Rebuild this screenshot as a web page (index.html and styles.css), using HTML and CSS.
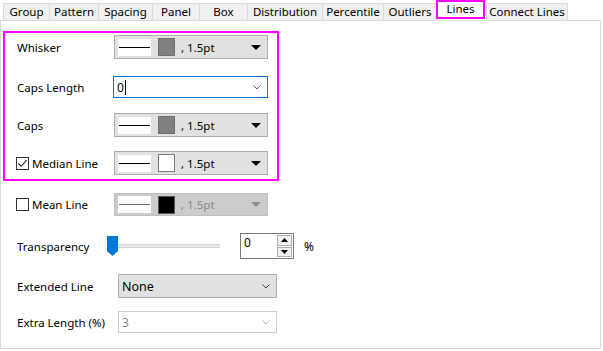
FILE: index.html
```html
<!DOCTYPE html>
<html lang="en">
<head>
    <meta charset="UTF-8">
    <title>Lines</title>
    <link rel="stylesheet" href="styles.css">
</head>
<body>
    <div class="tabs">
        <div class="tab">Group</div>
        <div class="tab">Pattern</div>
        <div class="tab">Spacing</div>
        <div class="tab">Panel</div>
        <div class="tab">Box</div>
        <div class="tab">Distribution</div>
        <div class="tab">Percentile</div>
        <div class="tab">Outliers</div>
        <div class="tab tab-active">Lines</div>
        <div class="tab">Connect Lines</div>
    </div>
    <div class="panel">
        <div class="group-box">
            <div class="row row-whisker">
                <span class="label">Whisker</span>
                <div class="combo">
                    <span class="line-sample"></span>
                    <span class="swatch swatch-gray"></span>
                    <span class="combo-text">, 1.5pt</span>
                    <span class="arrow"></span>
                </div>
            </div>
            <div class="row row-caps-length">
                <span class="label">Caps Length</span>
                <div class="edit-combo focused">
                    <span class="edit-text">0</span><span class="caret"></span>
                    <svg class="chevron" width="8" height="5" viewBox="0 0 8 5"><path d="M0.5 0.5 L4 4 L7.5 0.5" fill="none" stroke="#606060" stroke-width="1"/></svg>
                </div>
            </div>
            <div class="row row-caps">
                <span class="label">Caps</span>
                <div class="combo">
                    <span class="line-sample"></span>
                    <span class="swatch swatch-gray"></span>
                    <span class="combo-text">, 1.5pt</span>
                    <span class="arrow"></span>
                </div>
            </div>
            <div class="row row-median">
                <label class="label check-label">
                    <span class="checkbox">
                        <svg width="11" height="11" viewBox="0 0 11 11"><path d="M1.5 5.5 L4.2 8.3 L9.6 2.2" fill="none" stroke="#222" stroke-width="1.1"/></svg>
                    </span>
                    Median Line
                </label>
                <div class="combo">
                    <span class="line-sample"></span>
                    <span class="swatch swatch-white"></span>
                    <span class="combo-text">, 1.5pt</span>
                    <span class="arrow"></span>
                </div>
            </div>
        </div>

        <div class="row row-mean">
            <label class="label check-label">
                <span class="checkbox"></span>
                Mean Line
            </label>
            <div class="combo disabled">
                <span class="line-sample"></span>
                <span class="swatch swatch-black"></span>
                <span class="combo-text">, 1.5pt</span>
                <span class="arrow"></span>
            </div>
        </div>

        <div class="row row-transparency">
            <span class="label label-short">Transparency</span>
            <div class="slider">
                <div class="slider-track"></div>
                <svg class="slider-thumb" width="11" height="20" viewBox="0 0 11 20"><path d="M0 0 H11 V15 L5.5 20 L0 15 Z" fill="#0078d7"/></svg>
            </div>
            <div class="spin">
                <span class="spin-text">0</span>
                <div class="spin-buttons">
                    <span class="spin-btn"><svg width="7" height="4" viewBox="0 0 7 4"><path d="M0 4 L3.5 0 L7 4 Z" fill="#000"/></svg></span>
                    <span class="spin-btn"><svg width="7" height="4" viewBox="0 0 7 4"><path d="M0 0 L3.5 4 L7 0 Z" fill="#000"/></svg></span>
                </div>
            </div>
            <span class="unit">%</span>
        </div>

        <div class="row row-extended">
            <span class="label label-wide">Extended Line</span>
            <div class="drop">
                <span class="drop-text">None</span>
                <svg class="chevron" width="8" height="5" viewBox="0 0 8 5"><path d="M0.5 0.5 L4 4 L7.5 0.5" fill="none" stroke="#404040" stroke-width="1"/></svg>
            </div>
        </div>

        <div class="row row-extra">
            <span class="label label-wide">Extra Length (%)</span>
            <div class="drop drop-disabled">
                <span class="drop-text">3</span>
                <svg class="chevron" width="8" height="5" viewBox="0 0 8 5"><path d="M0.5 0.5 L4 4 L7.5 0.5" fill="none" stroke="#b4b4b4" stroke-width="1"/></svg>
            </div>
        </div>
    </div>
</body>
</html>
```

FILE: styles.css
```css
* {
    box-sizing: border-box;
}
body {
    margin: 0;
    width: 603px;
    height: 351px;
    background: #fff;
    font-family: 'Segoe UI', 'Noto Sans', sans-serif;
    font-size: 11.5px;
    color: #000;
    overflow: hidden;
}
.tabs {
    display: flex;
    align-items: flex-end;
    height: 20px;
    padding-left: 3px;
}
.tab {
    height: 17px;
    margin-left: -1px;
    border: 1px solid #d9d9d9;
    border-bottom: none;
    background: #f0f0f0;
    text-align: center;
    line-height: 15px;
    white-space: nowrap;
}
.tab:first-child { margin-left: 0; width: 47px; }
.tab:nth-child(2) { width: 50px; }
.tab:nth-child(3) { width: 55px; }
.tab:nth-child(4) { width: 48px; }
.tab:nth-child(5) { width: 49px; }
.tab:nth-child(6) { width: 76px; }
.tab:nth-child(7) { width: 62px; }
.tab:nth-child(8) { width: 54px; }
.tab:nth-child(10) { width: 82px; margin-left: 1px; }
.tab-active {
    width: 49px;
    height: 19px;
    margin-bottom: 1px;
    border: 2px solid #ff00ff;
    background: #fff;
    line-height: 13px;
    position: relative;
    z-index: 1;
}
.panel {
    width: 601px;
    height: 329px;
    border: 1px solid #d9d9d9;
    background: #fff;
    padding-top: 10px;
}
.group-box {
    width: 276px;
    margin-left: 2px;
    border: 2px solid #ff00ff;
    padding: 2px 0 4px 11px;
}
.row {
    display: flex;
    align-items: center;
}
.label {
    width: 98px;
    flex: none;
    padding-left: 1px;
    white-space: nowrap;
}
.check-label {
    display: flex;
    align-items: center;
    padding-left: 0;
}
.checkbox {
    width: 13px;
    height: 13px;
    border: 1px solid #333;
    background: #fff;
    margin-right: 3px;
    display: flex;
    align-items: center;
    justify-content: center;
}
.row-whisker { height: 24px; }
.row-caps-length { height: 22px; margin-top: 17px; }
.row-caps { height: 24px; margin-top: 15px; }
.row-median { height: 24px; margin-top: 14px; }

.combo {
    width: 154px;
    height: 100%;
    display: flex;
    align-items: center;
    background: #e1e1e1;
    border: 1px solid #adadad;
    padding-left: 3px;
}
.line-sample {
    width: 33px;
    height: 17px;
    background: #fff;
    position: relative;
}
.line-sample::after {
    content: "";
    position: absolute;
    left: 1px;
    right: 1px;
    top: 8px;
    height: 1px;
    background: #000;
}
.swatch {
    width: 17px;
    height: 18px;
    margin-left: 7px;
    border: 1px solid #6e6e6e;
}
.swatch-gray { background: #808080; }
.swatch-white { background: #fff; border-color: #7a7a7a; }
.swatch-black { background: #000; border-color: #555; }
.combo-text {
    margin-left: 6px;
    flex: 1;
}
.arrow {
    width: 0;
    height: 0;
    margin-right: 6px;
    border-left: 5px solid transparent;
    border-right: 5px solid transparent;
    border-top: 5px solid #000;
}
.combo.disabled {
    background: #cccccc;
    border-color: #bfbfbf;
}
.combo.disabled .combo-text { color: #8a8a8a; }
.combo.disabled .arrow { border-top-color: #8c8c8c; }
.combo.disabled .line-sample::after { background: #6d6d6d; }

.edit-combo {
    width: 155px;
    height: 100%;
    margin-left: -1px;
    border: 1px solid #7a7a7a;
    display: flex;
    align-items: center;
    padding-left: 3px;
    padding-right: 6px;
    font-size: 12px;
}
.edit-combo.focused { border-color: #0078d7; }
.caret {
    width: 1px;
    height: 15px;
    background: #000;
    margin-left: 1px;
}
.chevron { margin-left: auto; }

.row-mean {
    height: 23px;
    margin-top: 12px;
    padding-left: 15px;
}
.row-transparency {
    height: 26px;
    margin-top: 17px;
    padding-left: 15px;
}
.label-short { width: 91px; }
.slider {
    width: 113px;
    height: 20px;
    position: relative;
}
.slider-track {
    position: absolute;
    left: 3px;
    right: 0;
    top: 8px;
    height: 4px;
    background: #e7eaea;
    border: 1px solid #d6d6d6;
}
.slider-thumb {
    position: absolute;
    left: 0;
    top: 0;
}
.spin {
    width: 54px;
    height: 26px;
    margin-left: 20px;
    border: 1px solid #7a7a7a;
    display: flex;
    align-items: center;
}
.spin-text {
    flex: 1;
    padding-left: 3px;
    align-self: flex-start;
    line-height: 18px;
    font-size: 12px;
}
.spin-buttons {
    width: 16px;
    height: 100%;
    display: flex;
    flex-direction: column;
    gap: 1px;
    padding: 1px 1px 1px 0;
}
.spin-btn {
    flex: 1;
    background: #f0f0f0;
    border: 1px solid #adadad;
    display: flex;
    align-items: center;
    justify-content: center;
}
.unit { margin-left: 10px; font-size: 12px; }

.row-extended {
    height: 24px;
    margin-top: 15px;
    padding-left: 15px;
}
.row-extra {
    height: 22px;
    margin-top: 13px;
    padding-left: 15px;
}
.label-wide { width: 102px; }
.drop {
    width: 159px;
    height: 100%;
    display: flex;
    align-items: center;
    background: #e1e1e1;
    border: 1px solid #adadad;
    padding: 0 6px 0 3px;
    font-size: 12.5px;
}
.drop-disabled {
    background: #fff;
    border-color: #cccccc;
    color: #838383;
    font-size: 12px;
}
```
